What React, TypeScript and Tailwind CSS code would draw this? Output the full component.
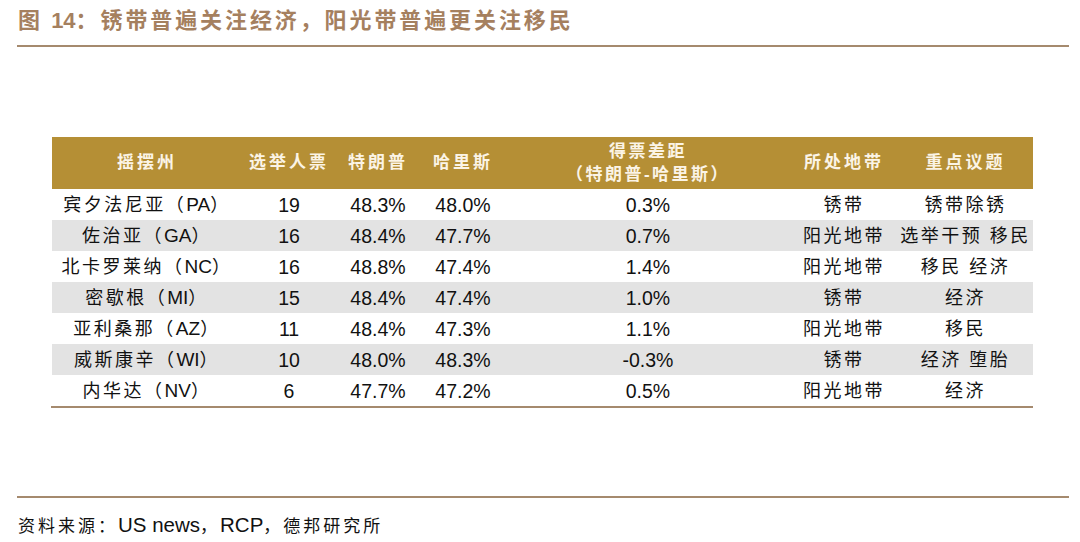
const rows = [
  ["宾夕法尼亚", "PA", "19", "48.3%", "48.0%", "0.3%", "锈带", "锈带除锈"],
  ["佐治亚", "GA", "16", "48.4%", "47.7%", "0.7%", "阳光地带", "选举干预 移民"],
  ["北卡罗莱纳", "NC", "16", "48.8%", "47.4%", "1.4%", "阳光地带", "移民 经济"],
  ["密歇根", "MI", "15", "48.4%", "47.4%", "1.0%", "锈带", "经济"],
  ["亚利桑那", "AZ", "11", "48.4%", "47.3%", "1.1%", "阳光地带", "移民"],
  ["威斯康辛", "WI", "10", "48.0%", "48.3%", "-0.3%", "锈带", "经济 堕胎"],
  ["内华达", "NV", "6", "47.7%", "47.2%", "0.5%", "阳光地带", "经济"],
];

const cols = ["w-[190px]", "w-[94px]", "w-[84px]", "w-[86px]", "w-[284px]", "w-[108px]", "w-[135px]"];

const App = () => {
  return (
    <div className="w-[1080px] h-[542px] bg-white flex flex-col font-['Liberation_Sans','Noto_Sans_CJK_SC',sans-serif]">
      <div className="pl-[17px] pr-[11px] pt-[7px]">
        <div className="text-[22px] leading-[28px] font-bold text-[#a5805f] pl-[1px]">
          <span className="tracking-[2.5px]">图 </span>
          <span>14</span>
          <span className="tracking-[2.9px]">：锈带普遍关注经济，阳光带普遍更关注移民</span>
        </div>
        <div className="mt-[10px] h-[2px] bg-[#a58a6e]" />
      </div>

      <div className="ml-[52px] mt-[90px] w-[981px]">
        <div className="flex h-[52px] bg-[#b58f35] text-[#fbf4e6] text-[17px] font-bold tracking-[3px]">
          {["摇摆州", "选举人票", "特朗普", "哈里斯"].map((h, i) => (
            <div key={h} className={`${cols[i]} flex items-center justify-center`}>{h}</div>
          ))}
          <div className={`${cols[4]} flex flex-col items-center justify-center leading-[23px] tracking-[2.5px]`}>
            <span>得票差距</span>
            <span>（特朗普-哈里斯）</span>
          </div>
          {["所处地带", "重点议题"].map((h, i) => (
            <div key={h} className={`${cols[i + 5]} flex items-center justify-center`}>{h}</div>
          ))}
        </div>
        {rows.map(([name, code, ...rest], ri) => (
          <div key={name} className={`flex h-[31px] items-center pt-[2px] text-[#111] ${ri % 2 === 1 ? "bg-[#e3e3e3]" : "bg-white"}`}>
            <div className={`${cols[0]} text-center text-[18px] tracking-[2.5px]`}>
              {name}（<span className="text-[19px] tracking-normal">{code}</span>）
            </div>
            {rest.map((c, ci) => (
              <div
                key={ci}
                className={`${cols[ci + 1]} text-center ${ci >= 4 ? "text-[18px] tracking-[2.5px]" : "text-[19.5px]"}`}
              >
                {c}
              </div>
            ))}
          </div>
        ))}
        <div className="h-[2px] bg-[#a58a6e] -ml-[1px]" />
      </div>

      <div className="pl-[17px] pr-[11px] mt-[88px]">
        <div className="h-[2px] bg-[#a58a6e]" />
        <div className="mt-[12px] text-[#111] pl-[1px] flex items-baseline">
          <span className="text-[17px] tracking-[3px]">资料来源：</span>
          <span className="text-[20.5px]">US news</span>
          <span className="text-[17px] tracking-[3px]">，</span>
          <span className="text-[20.5px]">RCP</span>
          <span className="text-[17px] tracking-[3px]">，德邦研究所</span>
        </div>
      </div>
    </div>
  );
};

export default App;
